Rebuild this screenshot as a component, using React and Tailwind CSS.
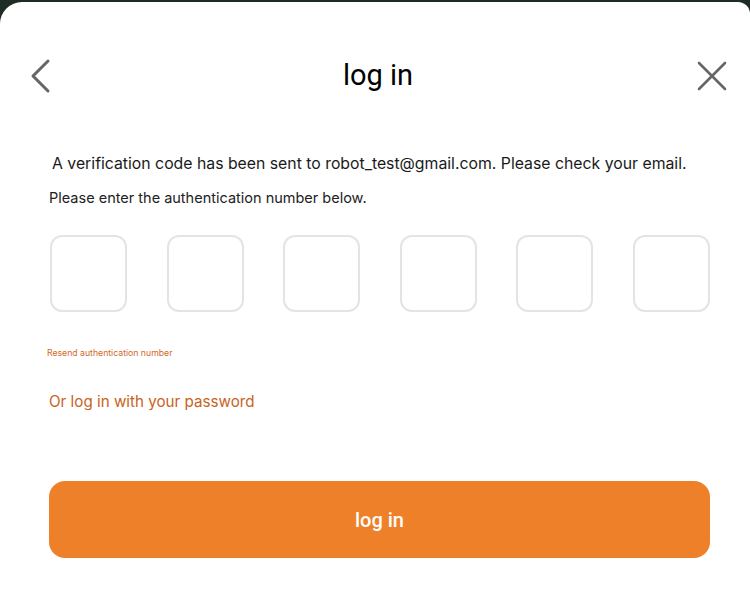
import React from 'react';

const BOXES = [0, 1, 2, 3, 4, 5];

export default function App() {
  return (
    <div className="w-[750px] h-[589px] bg-[#1f2b25] overflow-hidden">
      <div className="mt-[2px] h-[587px] bg-white rounded-tl-[22px] rounded-tr-[12px] font-['Inter','Noto_Sans',sans-serif]">
        {/* Header */}
        <div className="h-[149px] flex items-start pt-[55px] pl-[28px] pr-[22px]">
          <button className="w-[24px] h-[36px] flex items-center mt-[1px]">
            <svg width="24" height="36" viewBox="0 0 24 36">
              <polyline points="20,3 5,18 20,33" fill="none" stroke="#666" strokeWidth="3" strokeLinecap="round" strokeLinejoin="round" />
            </svg>
          </button>
          <h1 className="flex-1 text-center text-[29px] leading-[36px] text-black font-['Roboto',sans-serif] pl-[8px]">log in</h1>
          <button className="w-[32px] h-[32px] mt-[3px]">
            <svg width="32" height="32" viewBox="0 0 32 32">
              <path d="M3 3 L29 29 M29 3 L3 29" stroke="#666" strokeWidth="2.6" strokeLinecap="round" />
            </svg>
          </button>
        </div>

        <div className="px-[49px]">
          <p className="pl-[3px] text-[15.8px] leading-[24px] text-[#1a1a1a] mt-[1px] whitespace-nowrap">
            A verification code has been sent to robot_test@gmail.com. Please check your email.
          </p>
          <p className="mt-[12px] text-[14.5px] leading-[20px] text-[#222]">
            Please enter the authentication number below.
          </p>

          <div className="mt-[27px] ml-[1px] flex justify-between w-[660px]">
            {BOXES.map((i) => (
              <input
                key={i}
                maxLength={1}
                className="w-[77px] h-[77px] rounded-[12px] border-2 border-[#e4e4e4] bg-white outline-none text-center text-2xl"
              />
            ))}
          </div>

          <p className="mt-[34px] -ml-[2px] text-[8.7px] leading-[14px] text-[#d0691f]">Resend authentication number</p>

          <p className="mt-[31px] text-[15.2px] leading-[22px] text-[#c9621c]">Or log in with your password</p>

          <button className="mt-[68px] w-[661px] h-[77px] rounded-[16px] bg-[#ef802a] text-white text-[20px] font-medium font-['Roboto',sans-serif]">
            log in
          </button>
        </div>
      </div>
    </div>
  );
}
